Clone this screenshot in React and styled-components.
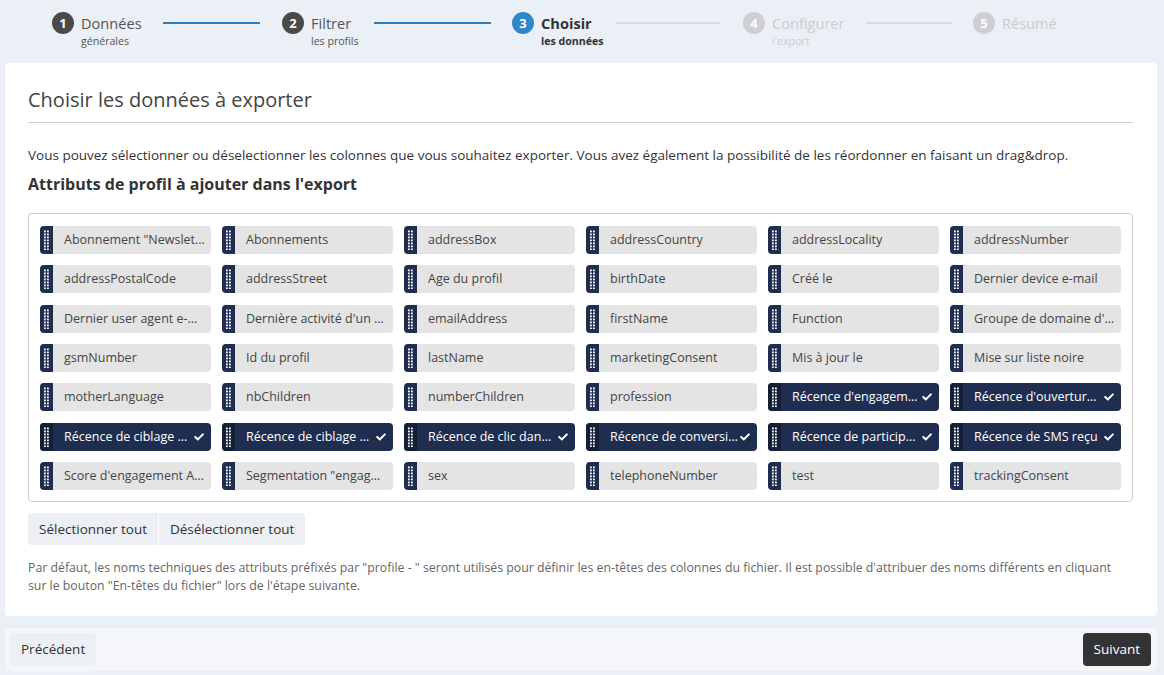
import React from "react";
import styled, { createGlobalStyle } from "styled-components";
import { FaCheck } from "react-icons/fa";

const GlobalStyle = createGlobalStyle`
  * { box-sizing: border-box; }
  body {
    margin: 0;
    background: #ebeff6;
    font-family: "Open Sans", "Liberation Sans", sans-serif;
    color: #333;
  }
`;

const Page = styled.div`
  width: 1164px;
  height: 675px;
  padding: 0 7px 0 5px;
  overflow: hidden;
`;

const Stepper = styled.div`
  display: flex;
  align-items: flex-start;
  height: 63px;
  padding: 12px 0 0 47px;
`;

const StepSlot = styled.div`
  display: flex;
  align-items: flex-start;
  width: ${(p) => p.$width}px;
`;

const StepCircle = styled.div`
  width: 22px;
  height: 22px;
  border-radius: 50%;
  flex-shrink: 0;
  display: flex;
  align-items: center;
  justify-content: center;
  color: #fff;
  font-weight: 700;
  font-size: 13px;
  background: ${(p) =>
    p.$state === "active" ? "#2f86c8" : p.$state === "done" ? "#4a4a4a" : "#cdcfd2"};
`;

const StepLabel = styled.div`
  margin-left: 7px;
  display: flex;
  flex-direction: column;
  color: ${(p) => (p.$state === "todo" ? "#c9ccd0" : p.$state === "active" ? "#333" : "#555")};
  font-weight: ${(p) => (p.$state === "active" ? 700 : 400)};
  white-space: nowrap;
`;

const StepTitle = styled.span`
  font-size: 14.6px;
  line-height: 22px;
`;

const StepSub = styled.span`
  font-size: 10.6px;
  line-height: 14px;
`;

const Connector = styled.div`
  width: ${(p) => p.$width}px;
  height: 2px;
  margin: 10px ${(p) => p.$mr}px 0 auto;
  background: ${(p) => (p.$on ? "#2f7fc0" : "#d6d9dd")};
`;

const Card = styled.div`
  background: #fff;
  border-radius: 4px;
  padding: 23px 24px 21px 23px;
`;

const Title = styled.h2`
  margin: 0;
  font-size: 20px;
  font-weight: 400;
  color: #444;
  line-height: 28px;
  padding-bottom: 8px;
  border-bottom: 1px solid #cfcfcf;
`;

const Intro = styled.p`
  margin: 22px 0 0;
  font-size: 13.5px;
  line-height: 20px;
  color: #333;
`;

const SectionTitle = styled.h3`
  margin: 8px 0 0;
  font-size: 16px;
  font-weight: 700;
  line-height: 22px;
  color: #333;
`;

const ChipBox = styled.div`
  margin-top: 18px;
  border: 1px solid #cbcbcb;
  border-radius: 4px;
  padding: 12px 11px 11px;
  display: grid;
  grid-template-columns: repeat(6, 1fr);
  column-gap: 11px;
  row-gap: 11.33px;
`;

const Chip = styled.div`
  display: flex;
  align-items: stretch;
  height: 28px;
  border-radius: 4px;
  overflow: hidden;
  background: ${(p) => (p.$selected ? "#1f2e50" : "#e4e4e4")};
  color: ${(p) => (p.$selected ? "#fff" : "#444")};
`;

const Handle = styled.div`
  width: 13px;
  flex-shrink: 0;
  display: flex;
  align-items: center;
  justify-content: center;
  background: ${(p) => (p.$selected ? "#141f38" : "#1f2e50")};
`;

const ChipText = styled.span`
  flex: 1;
  min-width: 0;
  padding: 0 ${(p) => (p.$selected ? 0 : 6)}px 0 11px;
  font-size: 12.5px;
  line-height: 28px;
  white-space: nowrap;
  overflow: hidden;
  text-overflow: ellipsis;
`;

const CheckMark = styled.span`
  display: flex;
  align-items: center;
  padding: 0 7px 0 2px;
  font-size: 10px;
  color: #fff;
`;

const ButtonGroup = styled.div`
  display: flex;
  margin-top: 11px;
`;

const GrayButton = styled.button`
  border: none;
  background: #eceff3;
  font-family: inherit;
  font-size: 13.5px;
  color: #333;
  height: ${(p) => p.$height || 32}px;
  padding: 0 11px;
  border-radius: ${(p) => p.$radius || "4px"};
  cursor: pointer;
`;

const Note = styled.p`
  margin: 14px 0 0;
  max-width: 1098px;
  font-size: 12.3px;
  line-height: 18px;
  color: #666;
`;

const Footer = styled.div`
  margin-top: 12px;
  background: #f5f6fa;
  border-radius: 4px;
  padding: 5px 6px 5px 5px;
  display: flex;
  justify-content: space-between;
`;

const DarkButton = styled(GrayButton)`
  background: #333;
  color: #fff;
`;

const Grip = () => (
  <svg width="5" height="20" viewBox="0 0 5 20">
    {Array.from({ length: 7 }).map((_, i) => (
      <g key={i} fill="#fff">
        <rect x="0" y={i * 3 + 0.5} width="1.8" height="1.8" />
        <rect x="3" y={i * 3 + 0.5} width="1.8" height="1.8" />
      </g>
    ))}
  </svg>
);

const steps = [
  { n: 1, title: "Données", sub: "générales", state: "done", width: 230, line: 97, mr: 22, on: true },
  { n: 2, title: "Filtrer", sub: "les profils", state: "done", width: 230, line: 117, mr: 21, on: true },
  { n: 3, title: "Choisir", sub: "les données", state: "active", width: 231, line: 104, mr: 23, on: false },
  { n: 4, title: "Configurer", sub: "l'export", state: "todo", width: 230, line: 85, mr: 21, on: false },
  { n: 5, title: "Résumé", sub: "", state: "todo", width: 150 },
];

const attributes = [
  ["Abonnement \"Newsletter\"", false],
  ["Abonnements", false],
  ["addressBox", false],
  ["addressCountry", false],
  ["addressLocality", false],
  ["addressNumber", false],
  ["addressPostalCode", false],
  ["addressStreet", false],
  ["Age du profil", false],
  ["birthDate", false],
  ["Créé le", false],
  ["Dernier device e-mail", false],
  ["Dernier user agent e-mail", false],
  ["Dernière activité d'un profil", false],
  ["emailAddress", false],
  ["firstName", false],
  ["Function", false],
  ["Groupe de domaine d'email", false],
  ["gsmNumber", false],
  ["Id du profil", false],
  ["lastName", false],
  ["marketingConsent", false],
  ["Mis à jour le", false],
  ["Mise sur liste noire", false],
  ["motherLanguage", false],
  ["nbChildren", false],
  ["numberChildren", false],
  ["profession", false],
  ["Récence d'engagement", true],
  ["Récence d'ouverture e-mail", true],
  ["Récence de ciblage e-mail", true],
  ["Récence de ciblage SMS", true],
  ["Récence de clic dans e-mail", true],
  ["Récence de conversion", true],
  ["Récence de participation", true],
  ["Récence de SMS reçu", true],
  ["Score d'engagement Automation", false],
  ["Segmentation \"engagement\"", false],
  ["sex", false],
  ["telephoneNumber", false],
  ["test", false],
  ["trackingConsent", false],
];

export default function App() {
  return (
    <Page>
      <GlobalStyle />
      <Stepper>
        {steps.map((s) => (
          <StepSlot key={s.n} $width={s.width}>
            <StepCircle $state={s.state}>{s.n}</StepCircle>
            <StepLabel $state={s.state}>
              <StepTitle>{s.title}</StepTitle>
              {s.sub && <StepSub>{s.sub}</StepSub>}
            </StepLabel>
            {s.line && <Connector $width={s.line} $mr={s.mr} $on={s.on} />}
          </StepSlot>
        ))}
      </Stepper>

      <Card>
        <Title>Choisir les données à exporter</Title>
        <Intro>
          Vous pouvez sélectionner ou déselectionner les colonnes que vous souhaitez exporter. Vous
          avez également la possibilité de les réordonner en faisant un drag&amp;drop.
        </Intro>
        <SectionTitle>Attributs de profil à ajouter dans l'export</SectionTitle>
        <ChipBox>
          {attributes.map(([label, selected]) => (
            <Chip key={label} $selected={selected}>
              <Handle $selected={selected}>
                <Grip />
              </Handle>
              <ChipText $selected={selected}>{label}</ChipText>
              {selected && (
                <CheckMark>
                  <FaCheck />
                </CheckMark>
              )}
            </Chip>
          ))}
        </ChipBox>
        <ButtonGroup>
          <GrayButton $radius="4px 0 0 4px">Sélectionner tout</GrayButton>
          <GrayButton $radius="0 4px 4px 0" style={{ marginLeft: 1 }}>
            Désélectionner tout
          </GrayButton>
        </ButtonGroup>
        <Note>
          Par défaut, les noms techniques des attributs préfixés par "profile - " seront utilisés pour
          définir les en-têtes des colonnes du fichier. Il est possible d'attribuer des noms
          différents en cliquant sur le bouton "En-têtes du fichier" lors de l'étape suivante.
        </Note>
      </Card>

      <Footer>
        <GrayButton $height={33}>Précédent</GrayButton>
        <DarkButton $height={33}>Suivant</DarkButton>
      </Footer>
    </Page>
  );
}
